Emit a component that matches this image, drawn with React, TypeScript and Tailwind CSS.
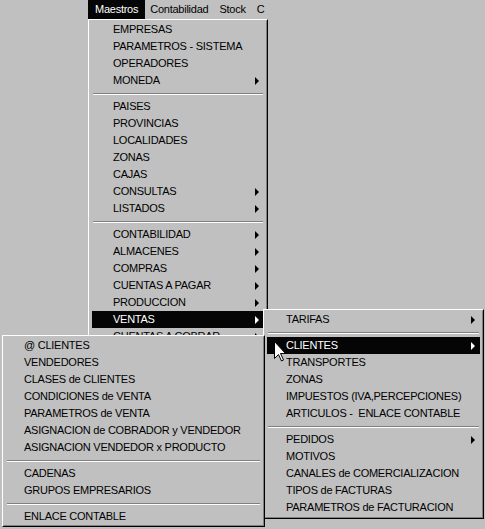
type Item = { label?: string; sub?: boolean; active?: boolean; sep?: boolean };

const SEP: Item = { sep: true };

const maestros: Item[] = [
  { label: "EMPRESAS" },
  { label: "PARAMETROS - SISTEMA" },
  { label: "OPERADORES" },
  { label: "MONEDA", sub: true },
  SEP,
  { label: "PAISES" },
  { label: "PROVINCIAS" },
  { label: "LOCALIDADES" },
  { label: "ZONAS" },
  { label: "CAJAS" },
  { label: "CONSULTAS", sub: true },
  { label: "LISTADOS", sub: true },
  SEP,
  { label: "CONTABILIDAD", sub: true },
  { label: "ALMACENES", sub: true },
  { label: "COMPRAS", sub: true },
  { label: "CUENTAS A PAGAR", sub: true },
  { label: "PRODUCCION", sub: true },
  { label: "VENTAS", sub: true, active: true },
  { label: "CUENTAS A COBRAR", sub: true },
];

const ventas: Item[] = [
  { label: "TARIFAS", sub: true },
  SEP,
  { label: "CLIENTES", sub: true, active: true },
  { label: "TRANSPORTES" },
  { label: "ZONAS" },
  { label: "IMPUESTOS (IVA,PERCEPCIONES)" },
  { label: "ARTICULOS -  ENLACE CONTABLE" },
  SEP,
  { label: "PEDIDOS", sub: true },
  { label: "MOTIVOS" },
  { label: "CANALES de COMERCIALIZACION" },
  { label: "TIPOS de FACTURAS" },
  { label: "PARAMETROS de FACTURACION" },
];

const clientes: Item[] = [
  { label: "@ CLIENTES" },
  { label: "VENDEDORES" },
  { label: "CLASES de CLIENTES" },
  { label: "CONDICIONES de VENTA" },
  { label: "PARAMETROS de VENTA" },
  { label: "ASIGNACION de COBRADOR y VENDEDOR" },
  { label: "ASIGNACION VENDEDOR x PRODUCTO" },
  SEP,
  { label: "CADENAS" },
  { label: "GRUPOS EMPRESARIOS" },
  SEP,
  { label: "ENLACE CONTABLE" },
];

function Menu({ items, className, indent }: { items: Item[]; className: string; indent: string }) {
  return (
    <div
      className={`absolute border border-t-white border-l-white border-r-black border-b-black bg-[#c0c0c0] ${className}`}
    >
      <div className="h-full border border-t-[#c0c0c0] border-l-[#c0c0c0] border-r-[#808080] border-b-[#808080] px-[2px]">
        {items.map((it, i) =>
          it.sep ? (
            <div key={i} className="h-[9px] pt-[4px] mx-[1px]">
              <div className="h-px bg-[#808080]" />
              <div className="h-px bg-white" />
            </div>
          ) : (
            <div
              key={i}
              className={`flex h-[17px] items-center pr-[5px] ${indent} ${
                it.active ? "bg-[#050505] text-white" : "text-black"
              }`}
            >
              <span className="flex-1 whitespace-pre">{it.label}</span>
              {it.sub && (
                <span
                  className={`h-0 w-0 border-y-[4px] border-y-transparent border-l-[4px] ${
                    it.active ? "border-l-white" : "border-l-black"
                  }`}
                />
              )}
            </div>
          )
        )}
      </div>
    </div>
  );
}

export default function App() {
  return (
    <div className="relative h-[529px] w-[485px] overflow-hidden bg-[#c0c0c0] font-['Liberation_Sans',Arial,sans-serif] text-[11px] leading-[17px] tracking-[-0.25px]">
      <div className="flex h-[19px] items-stretch pl-[88px] text-black">
        <span className="flex items-center bg-[#050505] px-[7px] text-white">Maestros</span>
        <span className="flex items-center pl-[5px] pr-[6px]">Contabilidad</span>
        <span className="flex items-center px-[5px]">Stock</span>
        <span className="flex items-center px-[6px]">C</span>
      </div>

      <Menu items={maestros} className="left-[88px] top-[19px] h-[330px] w-[180px]" indent="pl-[21px]" />
      <Menu items={ventas} className="left-[263px] top-[309px] h-[210px] w-[221px]" indent="pl-[19px]" />
      <Menu items={clientes} className="left-[2px] top-[335px] h-[192px] w-[263px]" indent="pl-[18px]" />

      <svg
        className="absolute left-[273px] top-[340px]"
        width="14"
        height="22"
        viewBox="0 0 14 22"
      >
        <path
          d="M1.5 1.5 L1.5 18.5 L5.5 14.5 L8.5 21 L10.5 20 L7.5 13.5 L12.5 13.5 Z"
          fill="white"
          stroke="black"
          strokeWidth="1"
          strokeLinejoin="miter"
        />
      </svg>
    </div>
  );
}
